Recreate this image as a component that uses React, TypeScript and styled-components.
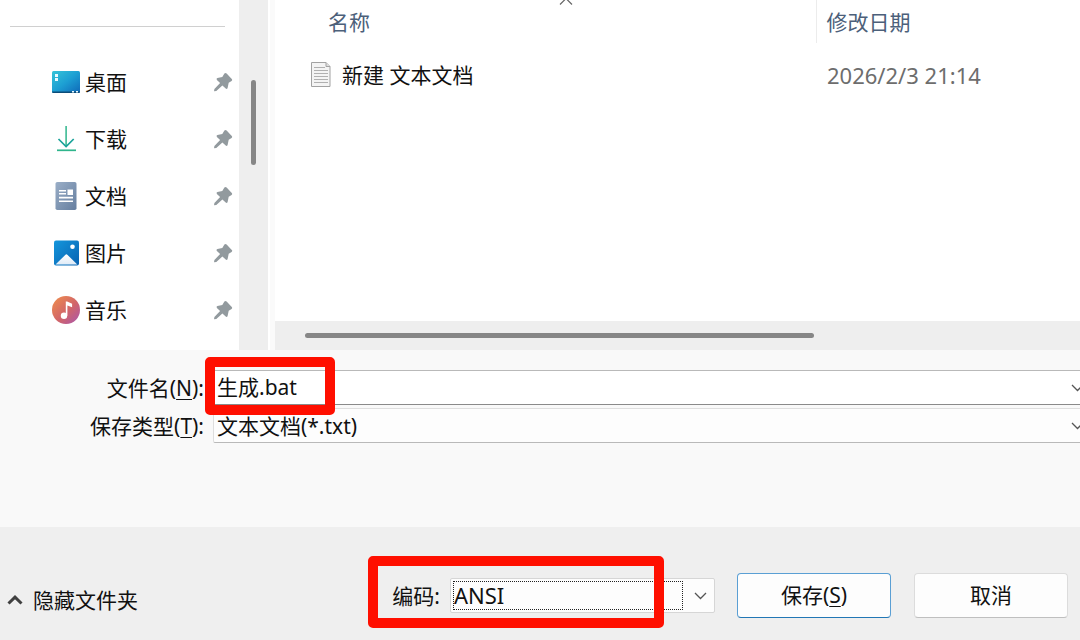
import React from "react";
import styled, { createGlobalStyle } from "styled-components";

const GlobalStyle = createGlobalStyle`
  *, *::before, *::after { box-sizing: border-box; }
  body {
    margin: 0;
    overflow: hidden;
    color: #111;
    font-family: "Noto Sans", "Noto Sans CJK SC", sans-serif;
    font-size: 21px;
    line-height: 32px;
  }
  button, input, select {
    margin: 0;
    font: inherit;
    color: inherit;
  }
`;

const Dialog = styled.main`
  display: flex;
  flex-direction: column;
  min-height: 100vh;
  overflow: hidden;
  background: #f9f9f9;
`;

const Browser = styled.section`
  display: flex;
  flex: 1;
  background: #fff;
`;

const Sidebar = styled.nav`
  flex: 0 0 239px;
  padding: 26px 0 12px;
`;

const Divider = styled.hr`
  margin: 0 14px 26px 10px;
  border: 0;
  border-top: 1px solid #d0d0d0;
`;

const PlaceList = styled.ul`
  margin: 0;
  padding: 0;
  list-style: none;
`;

const Place = styled.a`
  display: flex;
  align-items: center;
  height: 57px;
  padding: 0 6px 0 52px;
  gap: 5px;
  color: inherit;
  text-decoration: none;
`;

const PlaceName = styled.span`
  flex: 1;
`;

const VerticalTrack = styled.div`
  flex: 0 0 29px;
  padding: 80px 0 0 12px;
  background: #eee;
`;

const VerticalThumb = styled.div`
  width: 5px;
  height: 85px;
  border-radius: 3px;
  background: #868686;
`;

const Gutter = styled.div`
  flex: 0 0 7px;
  border-left: 2px solid #fff;
  background: #fafafa;
`;

const FilePane = styled.div`
  display: flex;
  flex: 1;
  flex-direction: column;
  min-width: 0;
`;

const FileTable = styled.table`
  width: 100%;
  table-layout: fixed;
  border-collapse: collapse;
  text-align: left;
`;

const HeadCell = styled.th<{ $name?: boolean }>`
  position: relative;
  width: ${(p) => (p.$name ? "541px" : "auto")};
  height: 43px;
  padding: 0 0 0 ${(p) => (p.$name ? "53px" : "10px")};
  border-right: ${(p) => (p.$name ? "1px solid #ececec" : "0")};
  color: #4c607a;
  font-weight: 400;
`;

const SortMark = styled.svg`
  position: absolute;
  top: -3px;
  right: 243px;
`;

const Cell = styled.td<{ $muted?: boolean }>`
  height: 64px;
  padding: 0 0 0 ${(p) => (p.$muted ? "11px" : "36px")};
  color: ${(p) => (p.$muted ? "#6d6d6d" : "inherit")};
  font-size: ${(p) => (p.$muted ? "22px" : "inherit")};
`;

const FileName = styled.div`
  display: flex;
  align-items: center;
  gap: 11px;
`;

const HorizontalTrack = styled.div`
  height: 29px;
  margin-top: auto;
  padding: 12px 0 0 30px;
  background: #eee;
`;

const HorizontalThumb = styled.div`
  width: 509px;
  height: 5px;
  border-radius: 3px;
  background: #868686;
`;

const Fields = styled.section`
  display: flex;
  flex-direction: column;
  gap: 3px;
  padding: 20px 0 84px;
`;

const Field = styled.div`
  display: flex;
  align-items: center;
  height: 35px;
`;

const FieldLabel = styled.label`
  flex: 0 0 213px;
  padding-right: 9px;
  text-align: right;
  white-space: nowrap;
`;

const Combo = styled.div`
  position: relative;
  flex: 1;
  min-width: 0;
  margin-right: -12px;
`;

const NameInput = styled.input`
  display: block;
  width: 100%;
  height: 35px;
  padding: 0 32px 4px 3px;
  border: 1px solid #b9b9b9;
  border-bottom-color: #8a8a8a;
  border-radius: 2px;
  outline: 0;
  background: #fff;
`;

const TypeSelect = styled.select`
  display: block;
  width: 100%;
  height: 35px;
  padding: 0 32px 0 3px;
  border: 1px solid #dedede;
  border-bottom-color: #b9b9b9;
  border-radius: 2px;
  outline: 0;
  appearance: none;
  background: #fdfdfd;
`;

const ComboArrow = styled.svg`
  position: absolute;
  top: 13px;
  right: 8px;
  pointer-events: none;
`;

const Highlight = styled.div<{ $wide?: boolean }>`
  position: absolute;
  z-index: 1;
  top: ${(p) => (p.$wide ? "-22px" : "-13px")};
  left: ${(p) => (p.$wide ? "-82px" : "-8px")};
  width: ${(p) => (p.$wide ? "296px" : "130px")};
  height: ${(p) => (p.$wide ? "72px" : "58px")};
  border: 10px solid #ff0f00;
  border-radius: 5px;
  pointer-events: none;
`;

const Footer = styled.footer`
  display: flex;
  align-items: flex-end;
  height: 113px;
  padding: 0 12px 22px 7px;
  background: #efefef;
`;

const HideFolders = styled.button`
  display: flex;
  align-items: center;
  height: 36px;
  gap: 10px;
  margin-right: auto;
  padding: 0;
  border: 0;
  background: none;
`;

const Encoding = styled.div`
  display: flex;
  align-items: center;
  height: 45px;
  gap: 10px;
  margin-right: 22px;
`;

const EncodingBox = styled.div`
  position: relative;
  width: 265px;
`;

const EncodingSelect = styled.select`
  display: block;
  width: 100%;
  height: 35px;
  padding: 0 34px 2px 3px;
  border: 1px solid #d6d6d6;
  border-radius: 2px;
  outline: 0;
  appearance: none;
  background: #fdfdfd;
  font-size: 22px;
`;

const FocusRing = styled.div`
  position: absolute;
  inset: 3px 32px 3px 3px;
  border: 1px dotted #222;
  pointer-events: none;
`;

const ActionButton = styled.button<{ $primary?: boolean }>`
  width: 154px;
  height: 45px;
  margin-left: ${(p) => (p.$primary ? "0" : "23px")};
  padding: 0 0 2px;
  border: 1px solid ${(p) => (p.$primary ? "#5a9fd4" : "#dcdcdc")};
  border-bottom-color: ${(p) => (p.$primary ? "#2277b5" : "#bfbfbf")};
  border-radius: 4px;
  background: #fdfdfd;
`;

const Key = styled.span`
  text-decoration: underline;
  text-decoration-thickness: 1px;
  text-underline-offset: 3px;
`;

const Chevron = () => (
  <path d="M1 2l5.500 5.500L12 2" fill="none" stroke="#555" strokeWidth="1.300" />
);

const DesktopIcon = () => (
  <svg width="28" height="24" viewBox="0 0 28 24">
    <defs>
      <linearGradient id="desk" x1="0" y1="0" x2="1" y2="1">
        <stop offset="0" stopColor="#35c4d8" />
        <stop offset="0.500" stopColor="#1d9fd3" />
        <stop offset="1" stopColor="#0f68b8" />
      </linearGradient>
    </defs>
    <rect y="1" width="28" height="22" rx="1.500" fill="url(#desk)" />
    <path d="M0 21.500h28a1.500 1.500 0 0 1-1.500 1.500h-25A1.500 1.500 0 0 1 0 21.500z" fill="#0c4c78" />
    <path d="M3 4h3v3H3zM3 8h3v3H3zM20 21h2v1.500h-2zM24 21h2v1.500h-2z" fill="#e9faff" />
  </svg>
);

const DownloadIcon = () => (
  <svg width="28" height="28" viewBox="0 0 28 28">
    <path d="M14.100 1v20" stroke="#2fb58c" strokeWidth="1.500" />
    <path d="M6.500 14l7.600 7.600 7.600-7.600" fill="none" stroke="#1aa39a" strokeWidth="1.700" />
    <path d="M5 25.300h19" stroke="#2fb58c" strokeWidth="1.700" />
  </svg>
);

const DocumentIcon = () => (
  <svg width="28" height="28" viewBox="0 0 28 28">
    <defs>
      <linearGradient id="doc" x1="0" y1="0" x2="1" y2="1">
        <stop offset="0" stopColor="#9aaec7" />
        <stop offset="1" stopColor="#657e9f" />
      </linearGradient>
    </defs>
    <rect x="3.500" width="21" height="28" rx="1.800" fill="url(#doc)" />
    <path d="M7 8h7v1.600H7zM7 11h7v1.600H7zM15.500 7.500H21v5.600h-5.500zM7 14.800h14v1.600H7zM7 18.500h14v1.600H7z" fill="#fff" />
  </svg>
);

const PictureIcon = () => (
  <svg width="28" height="26" viewBox="0 0 28 26">
    <defs>
      <linearGradient id="pic" x1="0" y1="0" x2="1" y2="1">
        <stop offset="0" stopColor="#1496dc" />
        <stop offset="1" stopColor="#0862b1" />
      </linearGradient>
      <linearGradient id="hill" x1="0" y1="0" x2="0" y2="1">
        <stop offset="0" stopColor="#fff" />
        <stop offset="1" stopColor="#dfebf7" />
      </linearGradient>
    </defs>
    <rect x="2" y="0.500" width="25" height="25" rx="2" fill="url(#pic)" />
    <circle cx="20.500" cy="6.800" r="2.300" fill="#fff" />
    <path d="M3.500 24.500l9.700-9.600q1.200-1.200 2.400 0l9.700 9.600z" fill="url(#hill)" />
  </svg>
);

const MusicIcon = () => (
  <svg width="28" height="28" viewBox="0 0 28 28">
    <defs>
      <linearGradient id="music" x1="0" y1="0" x2="1" y2="1">
        <stop offset="0.100" stopColor="#eb8850" />
        <stop offset="0.550" stopColor="#d1656a" />
        <stop offset="1" stopColor="#a855ae" />
      </linearGradient>
    </defs>
    <circle cx="14" cy="14" r="14" fill="url(#music)" />
    <circle cx="12" cy="19.700" r="3.200" fill="#fff" />
    <path d="M13.800 5.500h1.300l5 2.200v3.600l-4.700-1.700v10.100h-1.600z" fill="#fff" />
  </svg>
);

const PinIcon = () => (
  <svg width="20" height="20" viewBox="0 0 20 20" aria-hidden="true">
    <path
      d="M11.400 1.600q1.100-1.100 2.200 0l5.200 5.300q1 1.100-.200 2l-2.900 1.900-1.100 5.200q-.600 1.700-1.900.600L9.400 13.400 3.300 18.900l-2.300.300.400-2.200 5.700-5.900L3.900 7.900q-1-1.200.500-1.800l4.900-1.200z"
      fill="#929a9e"
    />
  </svg>
);

const TextFileIcon = () => (
  <svg width="20" height="26" viewBox="0 0 20 26" aria-hidden="true">
    <path d="M.500.500h14.500l4 4v20H.500z" fill="#f4f4f4" stroke="#a2a2a2" />
    <path d="M15 .500v4h4" fill="#ddd" stroke="#a2a2a2" />
    <path d="M3 5.500h11M3 8.500h14M3 11.500h14M3 14.500h14M3 17.500h14M3 20.500h14" stroke="#b0b0b0" />
  </svg>
);

const places = [
  { name: "桌面", Icon: DesktopIcon },
  { name: "下载", Icon: DownloadIcon },
  { name: "文档", Icon: DocumentIcon },
  { name: "图片", Icon: PictureIcon },
  { name: "音乐", Icon: MusicIcon },
];

export default function App() {
  return (
    <Dialog>
      <GlobalStyle />
      <Browser>
        <Sidebar>
          <Divider />
          <PlaceList>
            {places.map(({ name, Icon }) => (
              <li key={name}>
                <Place href="#">
                  <Icon />
                  <PlaceName>{name}</PlaceName>
                  <PinIcon />
                </Place>
              </li>
            ))}
          </PlaceList>
        </Sidebar>
        <VerticalTrack>
          <VerticalThumb />
        </VerticalTrack>
        <Gutter />
        <FilePane>
          <FileTable>
            <thead>
              <tr>
                <HeadCell $name>
                  名称
                  <SortMark width="14" height="9" viewBox="0 0 14 9">
                    <path d="M1 7.500l6-6 6 6" fill="none" stroke="#666" strokeWidth="1.200" />
                  </SortMark>
                </HeadCell>
                <HeadCell>修改日期</HeadCell>
              </tr>
            </thead>
            <tbody>
              <tr>
                <Cell>
                  <FileName>
                    <TextFileIcon />
                    新建 文本文档
                  </FileName>
                </Cell>
                <Cell $muted>2026/2/3 21:14</Cell>
              </tr>
            </tbody>
          </FileTable>
          <HorizontalTrack>
            <HorizontalThumb />
          </HorizontalTrack>
        </FilePane>
      </Browser>

      <Fields>
        <Field>
          <FieldLabel htmlFor="file-name">
            文件名(<Key>N</Key>):
          </FieldLabel>
          <Combo>
            <NameInput id="file-name" type="text" defaultValue="生成.bat" />
            <ComboArrow width="13" height="9" viewBox="0 0 13 9">
              <Chevron />
            </ComboArrow>
            <Highlight />
          </Combo>
        </Field>
        <Field>
          <FieldLabel htmlFor="file-type">
            保存类型(<Key>T</Key>):
          </FieldLabel>
          <Combo>
            <TypeSelect id="file-type">
              <option>文本文档(*.txt)</option>
            </TypeSelect>
            <ComboArrow width="13" height="9" viewBox="0 0 13 9">
              <Chevron />
            </ComboArrow>
          </Combo>
        </Field>
      </Fields>

      <Footer>
        <HideFolders type="button">
          <svg width="16" height="12" viewBox="0 0 16 12" aria-hidden="true">
            <path d="M1.500 9.500L8 3.200l6.500 6.300" fill="none" stroke="#404040" strokeWidth="3" />
          </svg>
          隐藏文件夹
        </HideFolders>
        <Encoding>
          <label htmlFor="encoding">编码:</label>
          <EncodingBox>
            <EncodingSelect id="encoding">
              <option>ANSI</option>
            </EncodingSelect>
            <FocusRing />
            <ComboArrow width="13" height="9" viewBox="0 0 13 9">
              <Chevron />
            </ComboArrow>
            <Highlight $wide />
          </EncodingBox>
        </Encoding>
        <ActionButton type="button" $primary>
          保存(<Key>S</Key>)
        </ActionButton>
        <ActionButton type="button">取消</ActionButton>
      </Footer>
    </Dialog>
  );
}
